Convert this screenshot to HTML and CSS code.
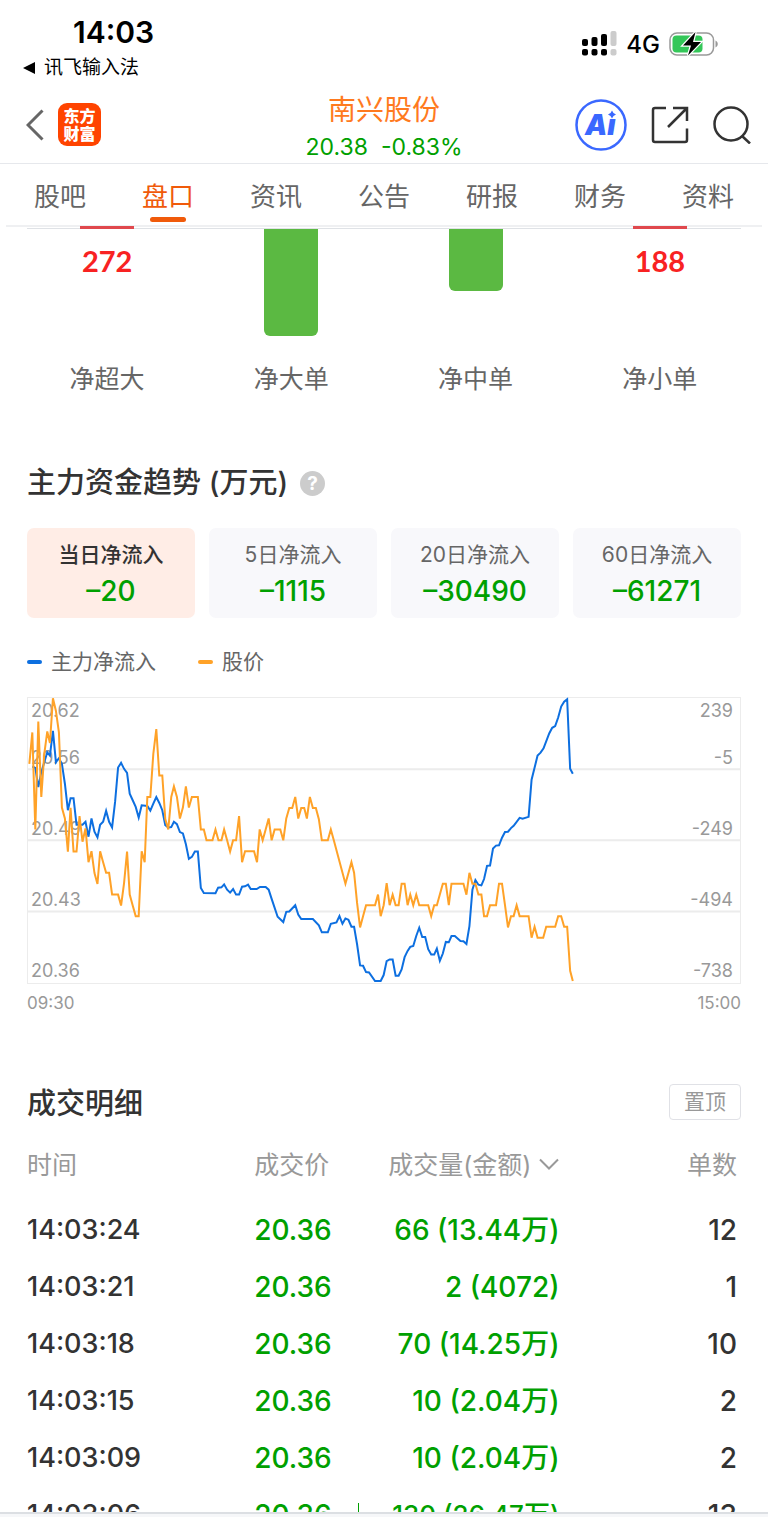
FILE: index.html
```html
<!DOCTYPE html>
<html lang="zh-CN">
<head>
  <meta charset="UTF-8" />
  <meta name="viewport" content="width=device-width, initial-scale=1" />
  <title>南兴股份 - 盘口</title>
  <link rel="stylesheet" href="styles.css">
</head>
<body>
  <div class="status-bar">
    <div class="status-left">
      <div class="clock">14:03</div>
      <a class="back-app" href="#">
        <svg width="13" height="12" viewBox="0 0 13 12"><path d="M0 6 12 0v12z"/></svg>
        讯飞输入法
      </a>
    </div>
    <div class="status-right">
      <svg class="signal" width="35" height="26" viewBox="0 0 35 26">
        <rect x="0" y="8" width="6" height="7" rx="2"/>
        <rect x="9.500" y="6" width="6" height="9" rx="2"/>
        <rect x="19" y="3" width="6" height="12" rx="2"/>
        <rect class="off" x="28.500" y="0" width="6" height="15" rx="2"/>
        <rect x="0" y="18" width="6" height="6.500" rx="2"/>
        <rect x="9.500" y="18" width="6" height="6.500" rx="2"/>
        <rect x="19" y="18" width="6" height="6.500" rx="2"/>
        <rect class="off" x="28.500" y="18" width="6" height="6.500" rx="2"/>
      </svg>
      <span class="network">4G</span>
      <svg class="battery" width="50" height="26" viewBox="0 0 50 26">
        <rect x="1" y="2" width="43.500" height="22" rx="7" fill="none" stroke="#999" stroke-width="1.500"/>
        <rect x="3.500" y="4.500" width="30" height="17" rx="4" fill="#34c759"/>
        <path d="M46.500 9.500c3 1.500 3 5.500 0 7z" fill="#999"/>
        <path d="M26.500 1 14 14.500h8L19 24.500 32 11h-8z" fill="#000" stroke="#fff" stroke-width="2.500" paint-order="stroke"/>
      </svg>
    </div>
  </div>

  <header class="nav">
    <div class="nav-left">
      <button class="icon-btn" aria-label="返回">
        <svg width="18" height="32" viewBox="0 0 18 32" fill="none" stroke="#666" stroke-width="3"><path d="M16.500 1.500 2 16l14.500 14.500"/></svg>
      </button>
      <a class="logo" href="#"><span>东方</span><span>财富</span></a>
    </div>
    <div class="stock">
      <h1>南兴股份</h1>
      <div class="quote"><span>20.38</span><span>-0.83%</span></div>
    </div>
    <div class="nav-right">
      <button class="icon-btn" aria-label="Ai">
        <svg width="52" height="52" viewBox="0 0 52 52">
          <circle cx="26" cy="26" r="24.500" fill="none" stroke="#3a68ff" stroke-width="2.500"/>
          <text class="ai-text" x="10" y="36">Aı</text>
          <path d="M37 11.500q1 3 4 4-3 1-4 4-1-3-4-4 3-1 4-4z" fill="#3a68ff"/>
        </svg>
      </button>
      <button class="icon-btn" aria-label="分享">
        <svg width="38" height="38" viewBox="0 0 38 38" fill="none" stroke="#333" stroke-width="2.500">
          <path d="M15 2H4q-2 0-2 2v30q0 2 2 2h30q2 0 2-2V22.500M22 2h14v13M36 2 17 21"/>
        </svg>
      </button>
      <button class="icon-btn" aria-label="搜索">
        <svg width="38" height="38" viewBox="0 0 38 38" fill="none" stroke="#333" stroke-width="2.500">
          <circle cx="18" cy="18" r="16.500"/><path d="m29 30 8 7.500"/>
        </svg>
      </button>
    </div>
  </header>

  <nav class="tabs">
    <a href="#">股吧</a>
    <a href="#" class="active">盘口</a>
    <a href="#">资讯</a>
    <a href="#">公告</a>
    <a href="#">研报</a>
    <a href="#">财务</a>
    <a href="#">资料</a>
  </nav>

  <main class="content">
    <section class="order-bars">
      <div class="axis"></div>
      <div class="bar-cols">
        <div class="bar-col">
          <div class="plot"><div class="bar up"></div><span class="bar-value">272</span></div>
          <span class="bar-name">净超大</span>
        </div>
        <div class="bar-col">
          <div class="plot"><div class="bar down" style="height: 107px"></div></div>
          <span class="bar-name">净大单</span>
        </div>
        <div class="bar-col">
          <div class="plot"><div class="bar down" style="height: 62px"></div></div>
          <span class="bar-name">净中单</span>
        </div>
        <div class="bar-col">
          <div class="plot"><div class="bar up"></div><span class="bar-value">188</span></div>
          <span class="bar-name">净小单</span>
        </div>
      </div>
    </section>

    <section class="trend">
      <div class="section-head">
        <h2>主力资金趋势 (万元)</h2>
        <button class="help" aria-label="说明">?</button>
      </div>

      <div class="periods">
        <button class="period selected"><span>当日净流入</span><b>–20</b></button>
        <button class="period"><span>5日净流入</span><b>–1115</b></button>
        <button class="period"><span>20日净流入</span><b>–30490</b></button>
        <button class="period"><span>60日净流入</span><b>–61271</b></button>
      </div>

      <div class="legend">
        <span class="legend-item flow">主力净流入</span>
        <span class="legend-item price">股价</span>
      </div>

      <div class="chart">
        <div class="labels">
          <div><span>20.62</span><span>239</span></div>
          <div><span>20.56</span><span>-5</span></div>
          <div><span>20.49</span><span>-249</span></div>
          <div><span>20.43</span><span>-494</span></div>
          <div><span>20.36</span><span>-738</span></div>
        </div>
        <!-- one minute is about 9 units wide -->
        <svg viewBox="22 21 2142 861" preserveAspectRatio="none">
          <path class="grid-line" d="M22 236H2164M22 451H2164M22 666H2164"/>
          <polyline class="line-flow" points="35,228 44,232 53,290 62,245 71,215 80,185 88,195 97,120 106,215 115,203 124,220 133,280 142,360 150,324 159,324 168,404 186,404 195,395 204,440 213,385 222,425 231,442 239,404 248,395 257,362 266,395 275,412 284,335 293,231 302,217 311,235 320,247 328,310 337,330 346,350 355,382 364,345 381,347 390,361 399,340 408,320 417,338 426,360 435,405 444,412 453,411 461,395 470,402 479,426 488,430 497,463 506,507 515,501 524,485 533,485 542,595 551,610
            586,611 594,594 604,593 612,584 621,600 630,609 639,598 648,615 657,615 666,591 675,590 684,585 692,598 710,598 720,592 737,592 746,600 755,628 773,682 790,698 799,667 808,666 826,647 835,675 844,689 879,689 897,708 906,729 924,729 933,703 950,699 959,680 968,703 977,687 986,691 995,712 1003,712 1012,765 1021,829 1030,830 1039,849 1048,850 1066,876 1083,876 1092,858 1101,816 1110,811
            1119,811 1128,860 1137,860 1146,841 1155,804 1164,785 1172,773 1181,770 1190,740 1199,715 1208,743 1217,743 1226,780 1235,796 1244,796 1252,778 1261,815 1270,793 1279,758 1288,759 1296,740 1306,740 1323,755 1332,756 1341,764 1350,710 1359,600 1368,571 1377,585 1386,587 1394,568 1403,528 1412,527 1421,476 1430,467 1439,466 1448,443 1457,426 1466,425 1475,414 1483,407 1501,383 1510,386 1528,380 1537,268 1555,195 1564,186 1573,173 1590,128 1599,111 1608,106 1617,80 1626,47 1635,32 1644,25 1653,235 1661,250"/>
          <polyline class="line-price" points="26,220 35,125 44,418 53,92 62,320 71,190 80,122 88,157 97,22 106,60 115,125 124,352 133,385 142,485 150,353 159,485 168,485 177,378 186,455 195,415 204,517 213,484 222,550 231,583 239,484 248,517 257,549 266,549 275,615 293,615 302,648 311,580 320,485 328,615 337,648 346,680 355,680 364,484 373,517 381,320 390,320 399,190 408,115 417,255 426,255 435,387 444,418 453,320 461,288 470,320 479,385 488,352 497,288 506,352 515,320 533,320 542,418 551,418
            559,451 577,451 586,418 595,451 604,451 612,418 621,451 630,485 639,451 648,451 657,378 666,517 675,484 702,484 711,517 719,418 728,451 737,418 746,385 755,451 764,418 781,418 790,451 799,385 808,353 817,353 826,320 835,385 844,353 853,353 861,385 870,320 879,353 888,353 897,387 906,451 924,451 933,418 942,451 977,582 995,517 1003,549 1012,640 1021,714 1030,680 1039,647 1066,647 1075,615
            1083,680 1092,647 1101,580 1110,647 1119,615 1128,647 1137,647 1146,582 1155,582 1164,647 1172,615 1181,647 1190,615 1199,647 1226,647 1235,680 1244,647 1252,647 1270,582 1279,582 1288,647 1296,582 1332,582 1341,615 1350,549 1359,582 1368,582 1377,615 1386,615 1394,680 1403,680 1412,647 1430,647 1439,582 1448,582 1457,647 1466,714 1475,680 1483,680 1492,647 1501,680 1528,680 1537,745 1546,712 1555,745 1572,745 1581,712 1608,712 1617,680 1626,680 1635,712 1644,712 1653,845 1661,876"/>
        </svg>
      </div>
      <div class="chart-times"><span>09:30</span><span>15:00</span></div>
    </section>

    <section class="deals">
      <div class="section-head">
        <h2>成交明细</h2>
        <button class="pin">置顶</button>
      </div>
      <table>
        <thead>
          <tr>
            <th class="col-time">时间</th>
            <th class="col-price">成交价</th>
            <th class="col-amount">成交量(金额)<svg width="20" height="12" viewBox="0 0 20 12" fill="none" stroke="#999" stroke-width="2"><path d="m1 1.500 9 9 9-9"/></svg></th>
            <th class="col-count">单数</th>
          </tr>
        </thead>
        <tbody>
          <tr><td>14:03:24</td><td>20.36</td><td>66 (13.44万)</td><td>12</td></tr>
          <tr><td>14:03:21</td><td>20.36</td><td>2 (4072)</td><td>1</td></tr>
          <tr><td>14:03:18</td><td>20.36</td><td>70 (14.25万)</td><td>10</td></tr>
          <tr><td>14:03:15</td><td>20.36</td><td>10 (2.04万)</td><td>2</td></tr>
          <tr><td>14:03:09</td><td>20.36</td><td>10 (2.04万)</td><td>2</td></tr>
          <tr><td>14:03:06</td><td>20.36</td><td class="long"><i class="mark"></i>130 (26.47万)</td><td>13</td></tr>
        </tbody>
      </table>
    </section>
  </main>

  <footer class="bottom-edge"></footer>
</body>
</html>
```
FILE: styles.css
```css
* {
  box-sizing: border-box;
}

/* Base styles */
body {
  margin: 0;
  height: 100vh;
  display: flex;
  flex-direction: column;
  overflow: hidden;
  background-color: #fff;
  color: #333;
  font-family: Inter, "Noto Sans CJK SC", sans-serif;
}

h1, h2 {
  margin: 0;
}

a {
  color: inherit;
  text-decoration: none;
}

button {
  margin: 0;
  padding: 0;
  border: none;
  background: none;
  color: inherit;
  font-family: inherit;
  cursor: pointer;
}

svg {
  display: block;
}

/* Status bar */
.status-bar {
  flex: none;
  display: flex;
  justify-content: space-between;
  height: 84px;
  padding: 14px 49px 0 23px;
  color: #000;
}

.clock {
  padding-left: 50px;
  font-size: 30px;
  line-height: 36px;
  font-weight: 600;
}

.back-app {
  display: flex;
  align-items: center;
  gap: 8px;
  font-size: 19px;
  line-height: 36px;
}

.status-right {
  display: flex;
  align-items: center;
  height: 60px;
  gap: 9px;
}

.signal .off {
  fill: #ccc;
}

.network {
  font-size: 24px;
  font-weight: 500;
}

/* Top navigation */
.nav {
  flex: none;
  display: grid;
  grid-template-columns: 1fr auto 1fr;
  align-items: center;
  height: 80px;
  padding: 0 17px;
  border-bottom: 1px solid #e6e8ec;
}

.nav-left {
  display: flex;
  align-items: center;
  gap: 14px;
  padding-left: 9px;
}

.logo {
  display: flex;
  flex-direction: column;
  align-items: center;
  justify-content: center;
  width: 43px;
  height: 43px;
  border-radius: 9px;
  background-color: #ff4400;
  color: #fff;
  font-size: 16px;
  line-height: 18px;
  font-weight: 900;
}

.stock {
  padding-top: 7px;
  text-align: center;
}

.stock h1 {
  color: #ff7a1e;
  font-size: 28px;
  line-height: 38px;
  font-weight: 400;
}

.quote {
  display: flex;
  justify-content: center;
  gap: 13px;
  color: #00a000;
  font-size: 23px;
  line-height: 36px;
}

.nav-right {
  display: flex;
  align-items: center;
  justify-content: flex-end;
  gap: 24px;
}

.ai-text {
  fill: #3a68ff;
  font-size: 28px;
  font-style: italic;
  font-weight: 900;
}

/* Tabs */
.tabs {
  flex: none;
  display: grid;
  grid-template-columns: repeat(7, 1fr);
  height: 63px;
  margin: 0 6px;
  border-bottom: 2px solid #eff0f2;
}

.tabs a {
  display: flex;
  flex-direction: column;
  align-items: center;
  color: #666;
  font-size: 26px;
  line-height: 53px;
  padding-top: 6px;
}

.tabs .active {
  color: #f05a0a;
}

.tabs .active::after {
  content: "";
  width: 36px;
  height: 5px;
  margin-top: -6px;
  border-radius: 3px;
  background-color: #f05a0a;
}

.content {
  flex: 1;
  min-height: 0;
  overflow: hidden;
  margin-top: -1px;
}

/* Net order bars */
.axis {
  height: 1px;
  margin: 2px 27px 0;
  background-color: #dfe2e6;
}

.bar-cols {
  display: grid;
  grid-template-columns: repeat(4, 1fr);
  padding: 0 16px 0 15px;
}

.bar-col {
  display: flex;
  flex-direction: column;
  align-items: center;
}

.plot {
  display: flex;
  flex-direction: column;
  align-items: center;
  height: 131px;
}

.bar {
  width: 54px;
}

.bar.up {
  height: 3px;
  margin-top: -3px;
  background-color: #e0484d;
}

.bar.down {
  border-radius: 0 0 6px 6px;
  background-color: #5bb942;
}

.bar-value {
  margin-top: 14px;
  color: #f82222;
  font-family: Lato, sans-serif;
  font-size: 29px;
  line-height: 36px;
  font-weight: 700;
}

.bar-name {
  color: #666;
  font-size: 25px;
  line-height: 38px;
}

/* Section titles */
.section-head {
  display: flex;
  align-items: center;
}

.section-head h2 {
  font-size: 29px;
  line-height: 40px;
  font-weight: 500;
}

.help {
  width: 25px;
  height: 25px;
  margin-left: 12px;
  border-radius: 50%;
  background-color: #ccc;
  color: #fff;
  font-size: 19px;
  line-height: 25px;
  font-weight: 700;
}

/* Capital trend */
.trend {
  padding: 65px 27px 0;
}

.periods {
  display: grid;
  grid-template-columns: repeat(4, 1fr);
  gap: 14px;
  margin-top: 25px;
}

.period {
  display: flex;
  flex-direction: column;
  align-items: center;
  justify-content: center;
  height: 90px;
  border-radius: 7px;
  background-color: #f8f8fb;
}

.period span {
  color: #666;
  font-size: 21px;
  line-height: 36px;
}

.period b {
  color: #00a000;
  font-size: 28px;
  line-height: 36px;
  font-weight: 500;
}

.period.selected {
  background-color: #ffede6;
}

.period.selected span {
  color: #333;
  font-weight: 500;
}

.legend {
  display: flex;
  gap: 42px;
  margin-top: 26px;
  color: #666;
  font-size: 21px;
  line-height: 36px;
}

.legend-item {
  display: flex;
  align-items: center;
  gap: 9px;
}

.legend-item::before {
  content: "";
  width: 15px;
  height: 4px;
  border-radius: 2px;
}

.legend-item.flow::before {
  background-color: #0d6fe0;
}

.legend-item.price::before {
  background-color: #ffa228;
}

.chart {
  display: grid;
  height: 287px;
  margin-top: 17px;
  border: 1px solid #ececec;
}

.chart > * {
  grid-area: 1 / 1;
  min-width: 0;
  min-height: 0;
}

.chart svg {
  width: 100%;
  height: 100%;
  overflow: visible;
}

.labels {
  display: grid;
  grid-template-rows: 24px 47px 1fr 1fr 1fr;
  padding: 1px 7px 0 3px;
  color: #999;
  font-size: 18px;
  line-height: 24px;
}

.labels div {
  display: flex;
  justify-content: space-between;
  align-items: flex-end;
}

.grid-line,
.line-flow,
.line-price {
  fill: none;
  stroke-width: 2px;
  vector-effect: non-scaling-stroke;
}

.grid-line {
  stroke: #ececec;
}

.line-flow {
  stroke: #0d6fe0;
}

.line-price {
  stroke: #ffa228;
}

.chart-times {
  display: flex;
  justify-content: space-between;
  margin-top: 7px;
  color: #999;
  font-size: 17px;
  line-height: 24px;
}

/* Deal list */
.deals {
  padding: 65px 27px 0;
}

.deals .section-head {
  justify-content: space-between;
}

.deals h2 {
  padding-top: 4px;
}

.pin {
  width: 72px;
  height: 36px;
  border: 1px solid #e0e1e6;
  border-radius: 4px;
  color: #999;
  font-size: 21px;
  line-height: 34px;
}

table {
  width: 100%;
  padding-right: 4px;
  table-layout: fixed;
  border-spacing: 0;
}

th {
  height: 77px;
  padding: 0;
  color: #999;
  font-size: 25px;
  font-weight: 400;
  text-align: left;
  white-space: nowrap;
}

th svg {
  display: inline-block;
  margin-left: 8px;
  vertical-align: 4px;
}

td {
  height: 57px;
  padding: 0;
  font-size: 28px;
  line-height: 36px;
  font-weight: 500;
  white-space: nowrap;
}

td:first-child {
  font-size: 27px;
}

td.long {
  font-size: 26px;
}

.col-time {
  width: 32%;
}

.col-price {
  width: 14%;
}

.col-amount {
  width: 29%;
}

td:nth-child(2),
td:nth-child(3) {
  color: #00a000;
}

th:nth-child(n+3),
td:nth-child(n+3) {
  text-align: right;
}

.mark {
  float: left;
  width: 1px;
  height: 30px;
  margin: 6px 0 0 4px;
  background-color: #00a000;
}

.bottom-edge {
  flex: none;
  height: 5px;
  border-top: 2px solid #dcdfe3;
  background-color: #f6f7f9;
}
```
